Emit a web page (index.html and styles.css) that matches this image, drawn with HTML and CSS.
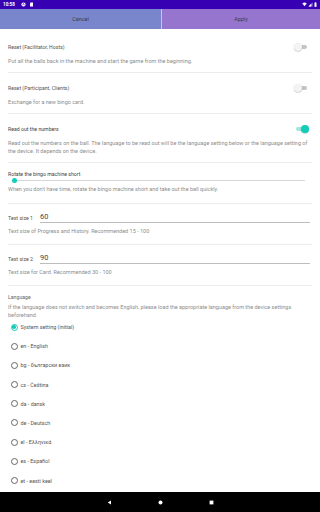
FILE: index.html
```html
<!DOCTYPE html>
<html lang="en">
<head>
    <meta charset="UTF-8">
    <meta name="viewport" content="width=device-width, initial-scale=1.0">
    <title>Settings</title>
    <link rel="stylesheet" href="styles.css">
</head>
<body>
    <div class="status-bar">
        <div class="status-left">
            <span class="clock">10:58</span>
            <svg class="status-icon" viewBox="0 0 10 10"><circle cx="5" cy="5" r="4.2" fill="#fff"/><path d="M3 6.5 L5 3 L7 6.5" stroke="#3700B3" stroke-width="1.3" fill="none"/></svg>
            <svg class="status-icon" viewBox="0 0 10 10"><path d="M3 1 H8 V9 H2 V2.5 Z" fill="#fff"/></svg>
        </div>
        <div class="status-right">
            <svg class="status-icon" viewBox="0 0 10 10"><path d="M0.5 3 Q5 -1 9.5 3 L5 8.5 Z" fill="#fff"/></svg>
            <svg class="status-icon" viewBox="0 0 10 10"><path d="M9 1 V9 H1 Z" fill="#fff" opacity="0.55"/><path d="M6 4 V9 H1 Z" fill="#fff"/></svg>
            <svg class="status-icon battery" viewBox="0 0 6 10"><rect x="2" y="0.3" width="2" height="1" fill="#fff"/><rect x="1" y="1.2" width="4" height="8.5" fill="#fff"/></svg>
        </div>
    </div>

    <div class="actions">
        <div class="action cancel">Cancel</div>
        <div class="action apply">Apply</div>
    </div>

    <div class="prefs">
        <div class="pref">
            <div class="pref-row">
                <span class="pref-title">Reset (Facilitator, Hosts)</span>
                <span class="switch"><span class="knob"></span></span>
            </div>
            <div class="pref-desc">Put all the balls back in the machine and start the game from the beginning.</div>
        </div>

        <div class="pref">
            <div class="pref-row">
                <span class="pref-title">Reset (Participant, Clients)</span>
                <span class="switch"><span class="knob"></span></span>
            </div>
            <div class="pref-desc">Exchange for a new bingo card.</div>
        </div>

        <div class="pref">
            <div class="pref-row">
                <span class="pref-title dark">Read out the numbers</span>
                <span class="switch on"><span class="knob"></span></span>
            </div>
            <div class="pref-desc">Read out the numbers on the ball. The language to be read out will be the language setting below or the language setting of the device. It depends on the device.</div>
        </div>

        <div class="pref pref-slider">
            <div class="pref-title dark">Rotate the bingo machine short</div>
            <div class="slider"><span class="slider-thumb"></span></div>
            <div class="pref-desc">When you don't have time, rotate the bingo machine short and take out the ball quickly.</div>
        </div>

        <div class="pref pref-edit">
            <div class="edit-row">
                <span class="edit-label">Text size 1</span>
                <span class="edit-value">60</span>
            </div>
            <div class="pref-desc">Text size of Progress and History. Recommended 15 - 100</div>
        </div>

        <div class="pref pref-edit">
            <div class="edit-row">
                <span class="edit-label">Text size 2</span>
                <span class="edit-value">90</span>
            </div>
            <div class="pref-desc">Text size for Card. Recommended 30 - 100</div>
        </div>

        <div class="pref pref-lang">
            <div class="pref-title">Language</div>
            <div class="pref-desc">If the language does not switch and becomes English, please load the appropriate language from the device settings beforehand.</div>
            <div class="radios">
                <div class="radio checked"><span class="dot"></span>System setting (initial)</div>
                <div class="radio"><span class="dot"></span>en - English</div>
                <div class="radio"><span class="dot"></span>bg - български език</div>
                <div class="radio"><span class="dot"></span>cs - Čeština</div>
                <div class="radio"><span class="dot"></span>da - dansk</div>
                <div class="radio"><span class="dot"></span>de - Deutsch</div>
                <div class="radio"><span class="dot"></span>el - Ελληνικά</div>
                <div class="radio"><span class="dot"></span>es - Español</div>
                <div class="radio"><span class="dot"></span>et - eesti keel</div>
            </div>
        </div>
    </div>

    <div class="nav-bar">
        <svg class="nav-icon" viewBox="0 0 10 10"><path d="M8 1 V9 L1.5 5 Z" fill="#fff"/></svg>
        <svg class="nav-icon" viewBox="0 0 10 10"><circle cx="5" cy="5" r="4" fill="#fff"/></svg>
        <svg class="nav-icon" viewBox="0 0 10 10"><rect x="1.2" y="1.2" width="7.6" height="7.6" fill="#fff"/></svg>
    </div>
</body>
</html>
```

FILE: styles.css
```css
body {
    margin: 0;
    width: 320px;
    height: 512px;
    overflow: hidden;
    font-family: Roboto, "Noto Sans", sans-serif;
    background: #fff;
    display: flex;
    flex-direction: column;
}

/* status bar */
.status-bar {
    height: 9px;
    background: #3700B3;
    display: flex;
    justify-content: space-between;
    align-items: center;
    padding: 0 3px;
    flex-shrink: 0;
}
.status-left, .status-right {
    display: flex;
    align-items: center;
    gap: 3px;
}
.status-right {
    gap: 1px;
}
.clock {
    color: #fff;
    font-size: 4.6px;
    font-weight: bold;
    line-height: 9px;
    margin-right: 3px;
}
.status-icon {
    width: 5px;
    height: 5px;
}
.battery {
    width: 3px;
}

/* Cancel / Apply */
.actions {
    height: 20px;
    display: flex;
    flex-shrink: 0;
}
.action {
    display: flex;
    align-items: center;
    justify-content: center;
    font-size: 5.4px;
    color: #3c3c4a;
}
.cancel {
    width: 161px;
    background: #7986CB;
    border-right: 1px solid #c9c3e6;
}
.apply {
    flex: 1;
    background: #9575CD;
}

/* preferences */
.prefs {
    flex: 1;
    padding-top: 3px;
    overflow: hidden;
}
.pref {
    margin: 0 8px;
    padding: 12px 0 7px;
    border-bottom: 1px solid #ececec;
}
.pref-row {
    display: flex;
    justify-content: space-between;
    align-items: center;
    height: 6px;
}
.pref-title {
    display: block;
    font-size: 5.2px;
    line-height: 6px;
    color: #555;
}
.pref-title.dark {
    color: #444;
}
.pref-desc {
    margin-top: 7px;
    font-size: 5.5px;
    line-height: 8px;
    color: #8d8d8d;
    padding-right: 4px;
}

.switch {
    position: relative;
    width: 11px;
    height: 4px;
    margin-right: 5px;
    border-radius: 2px;
    background: #c4c4c4;
}
.knob {
    position: absolute;
    left: -2px;
    top: -2px;
    width: 8px;
    height: 8px;
    border-radius: 50%;
    background: #f4f4f4;
    box-shadow: 0 0.5px 1px rgba(0, 0, 0, 0.3);
}
.switch.on {
    background: #9fe6dc;
}
.switch.on .knob {
    left: 5px;
    background: #12cdb8;
}

/* slider */
.pref-slider {
    padding: 8px 0 10px;
}
.slider {
    position: relative;
    height: 6px;
    margin: 0 7px 0 6px;
    display: flex;
    align-items: center;
}
.slider::before {
    content: "";
    flex: 1;
    height: 1px;
    background: #d6d6d6;
}
.slider-thumb {
    position: absolute;
    left: -2.5px;
    top: 0.5px;
    width: 5px;
    height: 5px;
    border-radius: 50%;
    background: #12cdb8;
}
.pref-slider .pref-desc {
    margin-top: 2px;
}

/* text size inputs */
.pref-edit {
    padding: 7px 0 9px;
}
.edit-row {
    display: flex;
    align-items: flex-end;
    height: 12px;
}
.edit-label {
    width: 32px;
    font-size: 5.3px;
    line-height: 9px;
    color: #555;
}
.edit-value {
    flex: 1;
    margin-right: 2px;
    font-size: 7.4px;
    line-height: 10px;
    color: #444;
    border-bottom: 1px solid #bdbdbd;
}
.pref-edit .pref-desc {
    margin-top: 4px;
}

/* language */
.pref-lang {
    border-bottom: none;
    padding-top: 8px;
}
.pref-lang .pref-title {
    color: #666;
}
.pref-lang .pref-desc {
    margin-top: 3px;
}
.radios {
    display: flex;
    flex-direction: column;
    gap: 11.2px;
    margin-top: 4px;
    padding-left: 2.5px;
}
.radio {
    display: flex;
    align-items: center;
    height: 8px;
    font-size: 5.4px;
    color: #555;
}
.dot {
    box-sizing: border-box;
    width: 7px;
    height: 7px;
    border-radius: 50%;
    border: 0.8px solid #666;
    margin-right: 3px;
    display: flex;
    align-items: center;
    justify-content: center;
}
.radio.checked .dot {
    border-color: #12cdb8;
}
.radio.checked .dot::after {
    content: "";
    width: 3.6px;
    height: 3.6px;
    border-radius: 50%;
    background: #12cdb8;
}

/* navigation bar */
.nav-bar {
    height: 20px;
    background: #000;
    display: flex;
    align-items: center;
    justify-content: center;
    gap: 46px;
    flex-shrink: 0;
}
.nav-icon {
    width: 5px;
    height: 5px;
}
```
